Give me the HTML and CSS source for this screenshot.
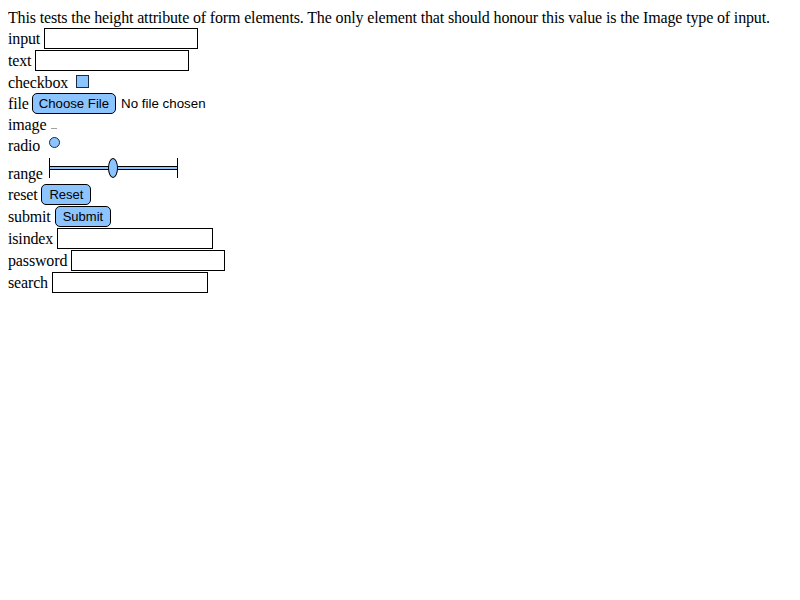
FILE: index.html
```html
<!DOCTYPE html>
<html>
<head>
<meta charset="utf-8">
<link rel="stylesheet" href="styles.css">
</head>
<body>
<p class="intro">This tests the height attribute of form elements. The only element that should honour this value is the Image type of input.</p>
<div class="row r22"><span class="lbl">input</span><input class="box" type="text"></div>
<div class="row r22"><span class="lbl">text</span><input class="box" type="text"></div>
<div class="row r22"><span class="lbl">checkbox</span><input class="check" type="checkbox"></div>
<div class="row r22"><span class="lbl lbl-file">file</span><button class="btn btn-file" type="button">Choose File</button><span class="nofile">No file chosen</span></div>
<div class="row r21"><span class="lbl lbl-small">image</span><span class="img-mark"></span></div>
<div class="row r21"><span class="lbl lbl-small">radio</span><input class="radio" type="radio"></div>
<div class="row r26"><span class="lbl lbl-range">range</span><span class="range"><span class="track"></span><span class="thumb"></span></span></div>
<div class="row r22"><span class="lbl">reset</span><button class="btn" type="reset">Reset</button></div>
<div class="row r22"><span class="lbl">submit</span><button class="btn" type="submit">Submit</button></div>
<div class="row r22"><span class="lbl">isindex</span><input class="box box-wide" type="text"></div>
<div class="row r22"><span class="lbl">password</span><input class="box" type="password"></div>
<div class="row r22"><span class="lbl">search</span><input class="box box-wide" type="text"></div>
</body>
</html>
```
FILE: styles.css
```css
html, body {
  background: #ffffff;
}
body {
  margin: 8px;
  font-family: "Liberation Serif", "Times New Roman", serif;
  font-size: 16px;
  color: #000000;
}
.intro {
  margin: 0;
  line-height: 19px;
  letter-spacing: -0.15px;
  white-space: nowrap;
}
.row {
  display: flex;
  align-items: flex-start;
  gap: 4px;
}
.r22 { height: 22px; }
.r21 { height: 21px; }
.r26 { height: 26px; }
.lbl {
  line-height: 18px;
  padding-top: 3px;
  white-space: nowrap;
  letter-spacing: -0.15px;
}
.lbl-file { padding-top: 2px; }
.lbl-small { padding-top: 1px; }
.lbl-range { padding-top: 8px; }
.box {
  appearance: none;
  -webkit-appearance: none;
  box-sizing: border-box;
  width: 154px;
  height: 21px;
  margin: 1px 0 0 0;
  padding: 0;
  border: 1px solid #000000;
  background: #ffffff;
  font: inherit;
}
.box-wide {
  width: 156px;
}
.check {
  appearance: none;
  -webkit-appearance: none;
  box-sizing: border-box;
  width: 13px;
  height: 13px;
  margin: 4px 0 0 4px;
  border: 1px solid #1a2a40;
  background: #8cc4ff;
}
.radio {
  appearance: none;
  -webkit-appearance: none;
  box-sizing: border-box;
  width: 11px;
  height: 11px;
  margin: 1px 0 0 5px;
  border: 1px solid #1a2a40;
  border-radius: 50%;
  background: #8cc4ff;
}
.btn {
  appearance: none;
  -webkit-appearance: none;
  box-sizing: border-box;
  height: 21px;
  margin: 1px 0 0 0;
  padding: 0 7px;
  border: 1px solid #000000;
  border-radius: 5px;
  background: #8cc4ff;
  font-family: "Liberation Sans", Arial, sans-serif;
  font-size: 13px;
  color: #000000;
}
.btn-file {
  margin: 0 0 0 -1px;
  padding: 0 6px;
  font-size: 13.2px;
}
.nofile {
  font-family: "Liberation Sans", Arial, sans-serif;
  font-size: 13.33px;
  line-height: 21px;
  margin-left: 1px;
}
.img-mark {
  width: 6px;
  height: 1px;
  margin: 13px 0 0 1px;
  background: #a0a0a0;
}
.range {
  position: relative;
  box-sizing: border-box;
  width: 129px;
  height: 20px;
  margin: 1px 0 0 2px;
  border-left: 1px solid #000000;
  border-right: 1px solid #000000;
}
.track {
  position: absolute;
  left: 0;
  right: 0;
  top: 8px;
  height: 4px;
  box-sizing: border-box;
  border-top: 1px solid #000000;
  border-bottom: 1px solid #000000;
  background: #8cc4ff;
}
.thumb {
  position: absolute;
  left: 58px;
  top: 0;
  box-sizing: border-box;
  width: 10px;
  height: 20px;
  border: 1px solid #000000;
  border-radius: 50%;
  background: #8cc4ff;
}
```
